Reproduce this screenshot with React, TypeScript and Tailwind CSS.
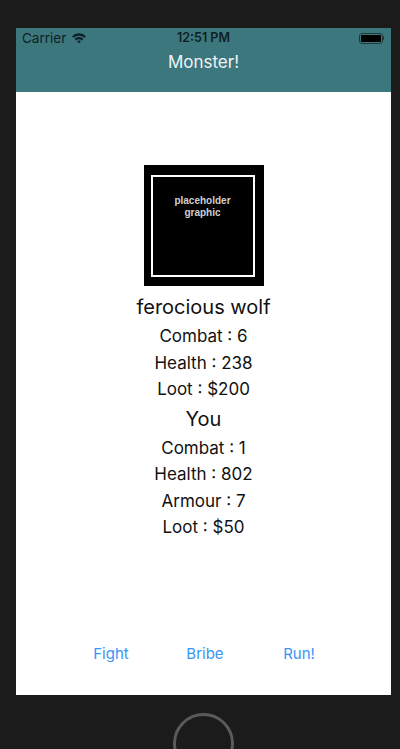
const STATS_MONSTER = ["Combat : 6", "Health : 238", "Loot : $200"];
const STATS_YOU = ["Combat : 1", "Health : 802", "Armour : 7", "Loot : $50"];

function Wifi() {
  return (
    <svg width="16" height="12" viewBox="0 0 16 12" className="ml-[5px]">
      <path d="M1 4.2 A10 10 0 0 1 15 4.2 L13.4 5.8 A7.8 7.8 0 0 0 2.6 5.8 Z" fill="#0d1f22" />
      <path d="M3.6 6.8 A6.4 6.4 0 0 1 12.4 6.8 L10.8 8.4 A4.2 4.2 0 0 0 5.2 8.4 Z" fill="#0d1f22" />
      <path d="M6.2 9.4 A2.6 2.6 0 0 1 9.8 9.4 L8 11.2 Z" fill="#0d1f22" />
    </svg>
  );
}

function Battery() {
  return (
    <div className="flex items-center">
      <div className="w-[24px] h-[11px] rounded-[3px] border border-[#1c3a3e] p-[1px]">
        <div className="w-full h-full bg-black rounded-[1px]" />
      </div>
      <div className="w-[1.5px] h-[4px] bg-[#1c3a3e] rounded-r-sm" />
    </div>
  );
}

export default function App() {
  return (
    <div
      className="w-[400px] h-[749px] bg-[#1b1b1b] pt-[28px] pl-[16px] overflow-hidden"
      style={{ fontFamily: "Inter, 'Liberation Sans', sans-serif" }}
    >
      <div className="w-[375px] h-[667px] bg-white flex flex-col">
        <div className="bg-[#3d777e] h-[64px] flex flex-col">
          <div className="h-[20px] flex items-center px-[6px] relative text-[#0d1f22]">
            <span className="text-[13.5px]">Carrier</span>
            <Wifi />
            <span className="absolute left-0 right-0 text-center text-[12.5px] font-semibold">12:51 PM</span>
            <div className="ml-auto mr-[1px]">
              <Battery />
            </div>
          </div>
          <div className="h-[44px] flex items-start justify-center pt-[2px]">
            <span className="text-[17px] text-[#eef4f4] leading-[24px]">Monster!</span>
          </div>
        </div>

        <div className="flex-1 flex flex-col items-center pt-[73px] text-[#111]">
          <div className="w-[120px] h-[121px] bg-black pt-[10px] pl-[7px] pr-[9px] pb-[9px]">
            <div className="w-full h-full border-2 border-white flex flex-col items-center pt-[18px]">
              <span
                className="text-[10px] leading-[12px] text-[#cfcfcf] font-bold text-center"
                style={{ fontFamily: "'Liberation Sans', Arial, sans-serif" }}
              >
                placeholder
                <br />
                graphic
              </span>
            </div>
          </div>

          <div className="mt-[9px] text-[20px] leading-[24px]">ferocious wolf</div>
          <div className="mt-[4px] flex flex-col items-center">
            {STATS_MONSTER.map((s) => (
              <div key={s} className="text-[17px] leading-[26.5px]">{s}</div>
            ))}
          </div>

          <div className="mt-[4px] text-[20px] leading-[24px]">You</div>
          <div className="mt-[4px] flex flex-col items-center">
            {STATS_YOU.map((s) => (
              <div key={s} className="text-[17px] leading-[26.5px]">{s}</div>
            ))}
          </div>

          <div className="flex-1" />

          <div className="h-[44px] mb-[19px] flex items-center justify-center">
            {["Fight", "Bribe", "Run!"].map((b) => (
              <button key={b} className="w-[91px] text-center text-[15px] text-[#3a94f5] ml-[3px]">
                {b}
              </button>
            ))}
          </div>
        </div>
      </div>

      <div className="w-[375px] flex justify-center pt-[18px]">
        <div className="w-[61px] h-[61px] rounded-full border-[3px] border-[#5a5a5a]" />
      </div>
    </div>
  );
}
